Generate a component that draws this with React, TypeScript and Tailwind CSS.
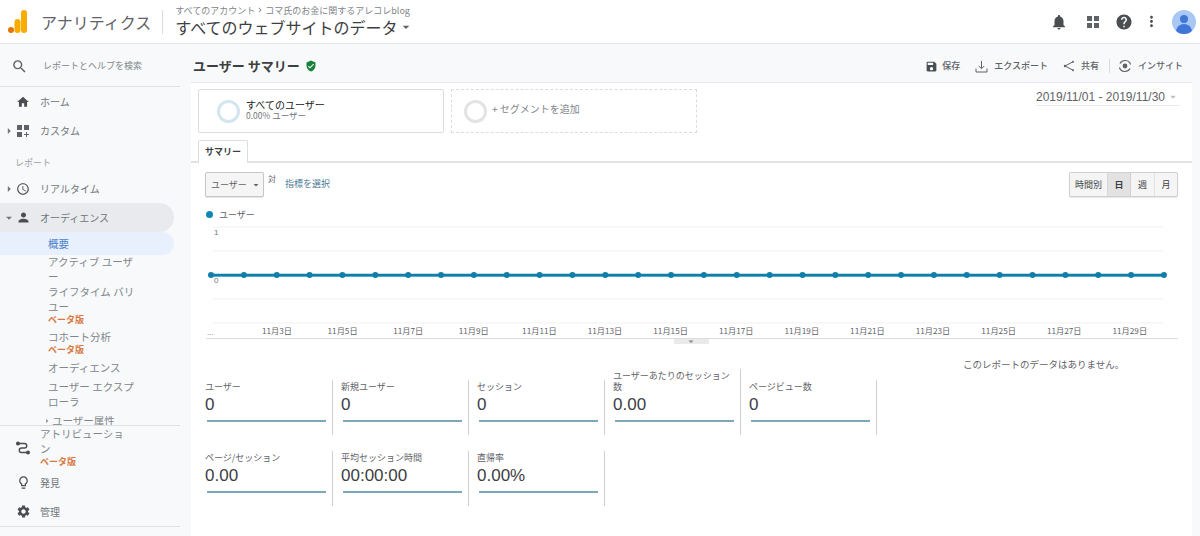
import React from 'react';
import {
  MdAccessTime,
  MdArrowDropDown,
  MdArrowRight,
  MdChevronRight,
  MdHelp,
  MdHome,
  MdMoreVert,
  MdNotifications,
  MdOutlineLightbulb,
  MdPerson,
  MdSave,
  MdSearch,
  MdSettings,
  MdVerifiedUser,
} from 'react-icons/md';

const font = 'font-["Noto_Sans_CJK_JP","Noto_Sans",sans-serif]';

function Logo() {
  return (
    <svg width="20" height="24" viewBox="0 0 20 24">
      <rect x="13" y="0" width="6" height="23" rx="3" fill="#f9ab00" />
      <rect x="6.5" y="9" width="6" height="14" rx="3" fill="#f9ab00" />
      <circle cx="3" cy="20" r="3" fill="#e37400" />
    </svg>
  );
}

function FourSquares({ plus }: { plus?: boolean }) {
  return (
    <svg width="14" height="14" viewBox="0 0 14 14" fill="#5f6368">
      <rect x="1" y="1" width="5" height="5" />
      <rect x="8" y="1" width="5" height="5" />
      <rect x="1" y="8" width="5" height="5" />
      {plus ? <path d="M10 8h1v2h2v1h-2v2h-1v-2H8v-1h2z" /> : <rect x="8" y="8" width="5" height="5" />}
    </svg>
  );
}

function AttributionIcon() {
  return (
    <svg width="14" height="14" viewBox="0 0 14 14" fill="none" stroke="#4a4e52" strokeWidth="1.4">
      <circle cx="2" cy="2.5" r="1.3" fill="#4a4e52" />
      <circle cx="12" cy="11.5" r="1.3" fill="#4a4e52" />
      <path d="M3 2.5h5.5a2.2 2.2 0 0 1 0 4.5h-3a2.2 2.2 0 0 0 0 4.5H11" />
    </svg>
  );
}

function ExportIcon() {
  return (
    <svg width="13" height="13" viewBox="0 0 13 13" fill="none" stroke="#5f6368" strokeWidth="1">
      <path d="M6.5 1v7.5M3.8 6l2.7 2.7L9.2 6" />
      <path d="M1 8.5v3.5h11V8.5" />
    </svg>
  );
}

function ShareIcon() {
  return (
    <svg width="12" height="12" viewBox="0 0 12 12" fill="#5f6368" stroke="#5f6368" strokeWidth="1">
      <path d="M10 1.8 2 6l8 4.2" fill="none" />
      <circle cx="10" cy="1.8" r="1" stroke="none" />
      <circle cx="2" cy="6" r="1.2" stroke="none" />
      <circle cx="10" cy="10.2" r="1" stroke="none" />
    </svg>
  );
}

function InsightIcon() {
  return (
    <svg width="14" height="14" viewBox="0 0 14 14" fill="none" stroke="#5f6368" strokeWidth="1.2">
      <path d="M2 4.5A5.8 5.8 0 0 1 12.6 5.5" />
      <path d="M12 9.5A5.8 5.8 0 0 1 1.4 8.5" />
      <circle cx="7" cy="7" r="2.4" fill="#5f6368" stroke="none" />
    </svg>
  );
}

function NavRow({
  icon,
  label,
  caret,
  open,
}: {
  icon: React.ReactNode;
  label: string;
  caret?: boolean;
  open?: boolean;
}) {
  return (
    <div className={`flex items-center h-[29px] w-[174px] shrink-0 rounded-r-full ${open ? 'bg-[#e8eaed]' : ''}`}>
      <span className="w-[16px] flex justify-center pl-[1px] text-[#70757a]">
        {caret && (open ? <MdArrowDropDown size={14} /> : <MdArrowRight size={14} />)}
      </span>
      <span className="w-[24px] flex justify-start text-[#4a4e52]">{icon}</span>
      <span className="text-[10px] text-[#70757a]">{label}</span>
    </div>
  );
}

function SubItem({ lines, beta, className }: { lines: string[]; beta?: boolean; className?: string }) {
  return (
    <div className={`pl-[48px] text-[10.5px] text-[#80868b] ${className ?? ''}`}>
      {lines.map((l) => (
        <div key={l} className="h-[15px] leading-[15px]">
          {l}
        </div>
      ))}
      {beta && <div className="h-[12px] leading-[12px] text-[9px] font-bold text-[#d9783f]">ベータ版</div>}
    </div>
  );
}

function Sidebar() {
  return (
    <aside className="w-[191px] shrink-0 h-[492px] bg-[#f8f9fa] flex flex-col overflow-hidden">
      <div className="w-[180px] h-[43px] border-b border-[#e0e0e0] flex items-center pl-[11px] pt-[2px] shrink-0">
        <MdSearch size={17} className="text-[#5f6368]" />
        <span className="ml-[15px] text-[9px] text-[#80868b]">レポートとヘルプを検索</span>
      </div>
      <div className="h-[339px] shrink-0 w-[180px] overflow-hidden border-b border-[#e0e0e0]">
        <NavRow icon={<MdHome size={14} />} label="ホーム" />
        <NavRow icon={<FourSquares plus />} label="カスタム" caret />
        <div className="h-[29px] pl-[15px] pt-[11px] leading-[14px] text-[9px] text-[#9aa0a6]">レポート</div>
        <NavRow icon={<MdAccessTime size={14} />} label="リアルタイム" caret />
        <NavRow icon={<MdPerson size={15} />} label="オーディエンス" caret open />
        <div className="w-[174px] h-[23px] rounded-r-full bg-[#e8f0fe] pl-[48px] text-[10.5px] leading-[23px] text-[#4a80c8]">
          概要
        </div>
        <SubItem className="mt-[-1px]" lines={['アクティブ ユーザ', 'ー']} />
        <SubItem lines={['ライフタイム バリ', 'ユー']} beta />
        <SubItem className="mt-[3px]" lines={['コホート分析']} beta />
        <SubItem className="mt-[4px]" lines={['オーディエンス']} />
        <SubItem className="mt-[4px]" lines={['ユーザー エクスプ', 'ローラ']} />
        <div className="flex items-center pl-[42px] mt-[4px] h-[15px] text-[10.5px] text-[#80868b]">
          <MdArrowRight size={10} />
          <span className="underline">ユーザー属性</span>
        </div>
      </div>
      <div className="flex w-[180px] h-[42px] shrink-0">
        <span className="w-[16px]" />
        <span className="w-[24px] pt-[15px]">
          <AttributionIcon />
        </span>
        <div className="text-[10.5px] text-[#80868b]">
          <div className="h-[15px] leading-[15px]">アトリビューショ</div>
          <div className="h-[15px] leading-[15px]">ン</div>
          <div className="h-[12px] leading-[12px] text-[9px] font-bold text-[#d9783f]">ベータ版</div>
        </div>
      </div>
      <NavRow icon={<MdOutlineLightbulb size={15} />} label="発見" />
      <NavRow icon={<MdSettings size={15} />} label="管理" />
      <div className="w-[180px] border-t border-[#e0e0e0]" />
    </aside>
  );
}

function TopBar() {
  return (
    <header className="h-[44px] flex items-center bg-white border-b border-[#e4e5e7] relative z-10 pl-[8px] pr-[4px]">
      <Logo />
      <span className="ml-[13px] text-[16px] text-[#5f6368]">アナリティクス</span>
      <span className="ml-[11px] h-[24px] border-l border-[#dadce0]" />
      <div className="ml-[12px] flex flex-col mb-[2px]">
        <div className="flex items-center text-[9px] leading-[11px] text-[#80868b] mt-[1px]">
          すべてのアカウント
          <MdChevronRight size={10} />
          コマ氏のお金に関するアレコレblog
        </div>
        <div className="flex items-center text-[16px] leading-[22px] text-[#3c4043]">
          すべてのウェブサイトのデータ
          <MdArrowDropDown size={16} className="text-[#5f6368]" />
        </div>
      </div>
      <div className="ml-auto flex items-center text-[#4a4e52]">
        <MdNotifications size={18} />
        <span className="ml-[18px]">
          <FourSquares />
        </span>
        <MdHelp size={18} className="ml-[15px]" />
        <MdMoreVert size={17} className="ml-[10px]" />
        <div className="ml-[12px] w-[24px] h-[24px] rounded-full bg-[#a9c7f5] overflow-hidden flex flex-col items-center">
          <span className="mt-[5px] w-[8px] h-[8px] rounded-full bg-[#3f75d6]" />
          <span className="mt-[1px] w-[16px] h-[10px] rounded-t-full bg-[#3f75d6]" />
        </div>
      </div>
    </header>
  );
}

function ToolButton({ icon, label }: { icon: React.ReactNode; label: string }) {
  return (
    <span className="flex items-center gap-[6px] text-[9px] font-medium text-[#5f6368]">
      {icon}
      {label}
    </span>
  );
}

function TitleBar() {
  return (
    <div className="h-[38px] bg-[#f8f9fa] flex items-center pl-[2px] pr-[17px] pt-[6px]">
      <h1 className="text-[13px] font-bold text-[#3c4043] pb-[1px]">ユーザー サマリー</h1>
      <MdVerifiedUser size={12} className="ml-[5px] text-[#188038]" />
      <div className="ml-auto flex items-center">
        <span className="flex items-center gap-[4px] text-[9px] font-medium text-[#5f6368]">
          <MdSave size={13} className="text-[#4a4e52]" />
          保存
        </span>
        <span className="ml-[15px]">
          <ToolButton icon={<ExportIcon />} label="エクスポート" />
        </span>
        <span className="ml-[15px]">
          <ToolButton icon={<ShareIcon />} label="共有" />
        </span>
        <span className="ml-[10px] h-[14px] border-l border-[#dadce0]" />
        <span className="ml-[8px]">
          <ToolButton icon={<InsightIcon />} label="インサイト" />
        </span>
      </div>
    </div>
  );
}

function Segments() {
  return (
    <div className="flex items-start pl-[7px] pr-[12px] pt-[6px]">
      <div className="w-[246px] h-[44px] border border-[#dadce0] rounded-[2px] flex items-center pl-[18px]">
        <span className="w-[23px] h-[23px] rounded-full border-[3px] border-[#d3e6ef]" />
        <div className="ml-[6px] mb-[4px]">
          <div className="text-[10px] leading-[12px] text-[#202124]">すべてのユーザー</div>
          <div className="text-[8.5px] leading-[9px] text-[#70757a]">0.00% ユーザー</div>
        </div>
      </div>
      <div className="ml-[7px] w-[246px] h-[44px] border border-dashed border-[#dadce0] flex items-center pl-[12px]">
        <span className="w-[23px] h-[23px] rounded-full border-[3px] border-[#e3e3e3]" />
        <span className="ml-[5px] mb-[6px] text-[10px] text-[#80868b]">+ セグメントを追加</span>
      </div>
      <div className="ml-auto w-[144px] border-b border-[#e8eaed] h-[17px] flex items-center text-[12px] leading-[16px] text-[#5f6368] font-['Liberation_Sans',sans-serif] whitespace-nowrap">
        2019/11/01 - 2019/11/30
        <MdArrowDropDown size={16} className="ml-[1px] text-[#bdc1c6]" />
      </div>
    </div>
  );
}

function Tabs() {
  return (
    <div className="h-[25px] mt-[5px] pl-[7px] border-b-[2px] border-[#e3e3e3] flex items-end">
      <div className="w-[50px] h-[23px] mb-[-2px] border border-b-0 border-[#dadce0] bg-white rounded-t-[2px] flex items-center justify-center text-[9px] font-bold text-[#3c4043]">
        サマリー
      </div>
    </div>
  );
}

function ChartControls() {
  return (
    <div className="flex items-start pl-[14px] pr-[14px] pt-[9px] h-[42px]">
      <div className="w-[59px] h-[25px] border border-[#c6c6c6] rounded-[2px] bg-[#f5f5f5] flex items-center pl-[5px] text-[9px] text-[#5f6368] shadow-[0_1px_1px_rgba(0,0,0,0.1)]">
        ユーザー
        <MdArrowDropDown size={12} className="ml-[3px]" />
      </div>
      <span className="ml-[4px] text-[8px] leading-[14px] text-[#5f6368]">対</span>
      <span className="ml-[9px] mt-[6px] text-[9px] leading-[12px] text-[#4d7a96]">指標を選択</span>
      <div className="ml-auto w-[109px] h-[25px] border border-[#d0d0d0] rounded-[2px] bg-[#f5f5f5] flex text-[9px] text-[#3c4043] shadow-[0_1px_1px_rgba(0,0,0,0.1)]">
        <span className="w-[38px] flex items-center justify-center border-r border-[#d8d8d8]">時間別</span>
        <span className="w-[23px] flex items-center justify-center bg-[#e2e2e2] border-r border-[#d0d0d0] font-bold">日</span>
        <span className="w-[24px] flex items-center justify-center border-r border-[#e0e0e0]">週</span>
        <span className="flex-1 flex items-center justify-center">月</span>
      </div>
    </div>
  );
}

const dots = Array.from({ length: 30 }, (_, i) => 6 + i * 32.86);
const ticks = Array.from({ length: 14 }, (_, i) => ({
  x: 72 + i * 65.6,
  label: `11月${3 + i * 2}日`,
}));

function Chart() {
  return (
    <div className="pl-[14px]">
      <div className="flex items-center h-[19px] text-[9px] text-[#5f6368]">
        <span className="ml-[1px] w-[7px] h-[7px] rounded-full bg-[#0f86b3]" />
        <span className="ml-[6px]">ユーザー</span>
      </div>
      <svg width="974" height="126" viewBox="0 0 974 126" className="block" fontFamily="Noto Sans CJK JP, sans-serif">
        {[3, 27, 75, 99].map((y) => (
          <line key={y} x1="8" x2="958" y1={y} y2={y} stroke="#f1f1f1" />
        ))}
        <text x="9" y="11" fontSize="8" fill="#70757a" fontFamily="Liberation Sans, sans-serif">1</text>
        <text x="9" y="59" fontSize="8" fill="#70757a" fontFamily="Liberation Sans, sans-serif">0</text>
        <line x1="6" x2="959" y1="51.5" y2="51.5" stroke="#5fc0dc" strokeWidth="3" />
        <line x1="6" x2="959" y1="51" y2="51" stroke="#117ea8" strokeWidth="2.4" />
        {dots.map((x) => (
          <circle key={x} cx={x} cy="51" r="3" fill="#117ea8" />
        ))}
        <text x="2" y="111" fontSize="8" fill="#9aa0a6">...</text>
        {ticks.map((t) => (
          <text key={t.label} x={t.x} y="110" textAnchor="middle" fontSize="8.2" fill="#5f6368">
            {t.label}
          </text>
        ))}
        <line x1="1" x2="973" y1="114.5" y2="114.5" stroke="#dcdcdc" />
        <rect x="469" y="115" width="35" height="5" fill="#eaeaea" />
        <path d="M483.5 116.5h5l-2.5 2.5z" fill="#80868b" />
      </svg>
    </div>
  );
}

function Metric({
  label,
  value,
  tall,
}: {
  label: React.ReactNode;
  value: string;
  tall?: boolean;
}) {
  return (
    <div
      className={`self-end w-[128px] mr-[8px] border-r border-[#cfcfcf] flex flex-col justify-end pb-[13px] ${
        tall ? 'h-[66px]' : 'h-[55px]'
      }`}
    >
      <div className="text-[9px] leading-[11px] text-[#5f6368]">{label}</div>
      <div className="mt-[3px] font-['Liberation_Sans',sans-serif] text-[17px] leading-[20px] text-[#3c4043]">
        {value}
      </div>
      <div className="mt-[5px] ml-[2px] mr-[6px] h-[2px] bg-[#7ea8b8]" />
    </div>
  );
}

function Metrics() {
  return (
    <div className="flex pl-[14px] mt-[19px]">
      <div className="w-[680px] shrink-0">
        <div className="flex items-end h-[66px]">
          <Metric label="ユーザー" value="0" />
          <Metric label="新規ユーザー" value="0" />
          <Metric label="セッション" value="0" />
          <Metric tall label={<>ユーザーあたりのセッション<br />数</>} value="0.00" />
          <Metric label="ページビュー数" value="0" />
        </div>
        <div className="flex mt-[16px]">
          <Metric label="ページ/セッション" value="0.00" />
          <Metric label="平均セッション時間" value="00:00:00" />
          <Metric label="直帰率" value="0.00%" />
        </div>
      </div>
      <p className="ml-[78px] mt-[-12px] h-[14px] text-[9.5px] leading-[14px] text-[#5f6368]">
        このレポートのデータはありません。
      </p>
    </div>
  );
}

export default function App() {
  return (
    <div className={`w-[1200px] h-[536px] overflow-hidden bg-white ${font}`}>
      <TopBar />
      <div className="flex h-[492px]">
        <Sidebar />
        <main className="flex-1 bg-[#f8f9fa] overflow-hidden">
          <TitleBar />
          <div className="w-[1001px] h-[454px] bg-white border-t border-[#e8eaed] overflow-hidden">
            <Segments />
            <Tabs />
            <ChartControls />
            <Chart />
            <Metrics />
          </div>
        </main>
      </div>
    </div>
  );
}
